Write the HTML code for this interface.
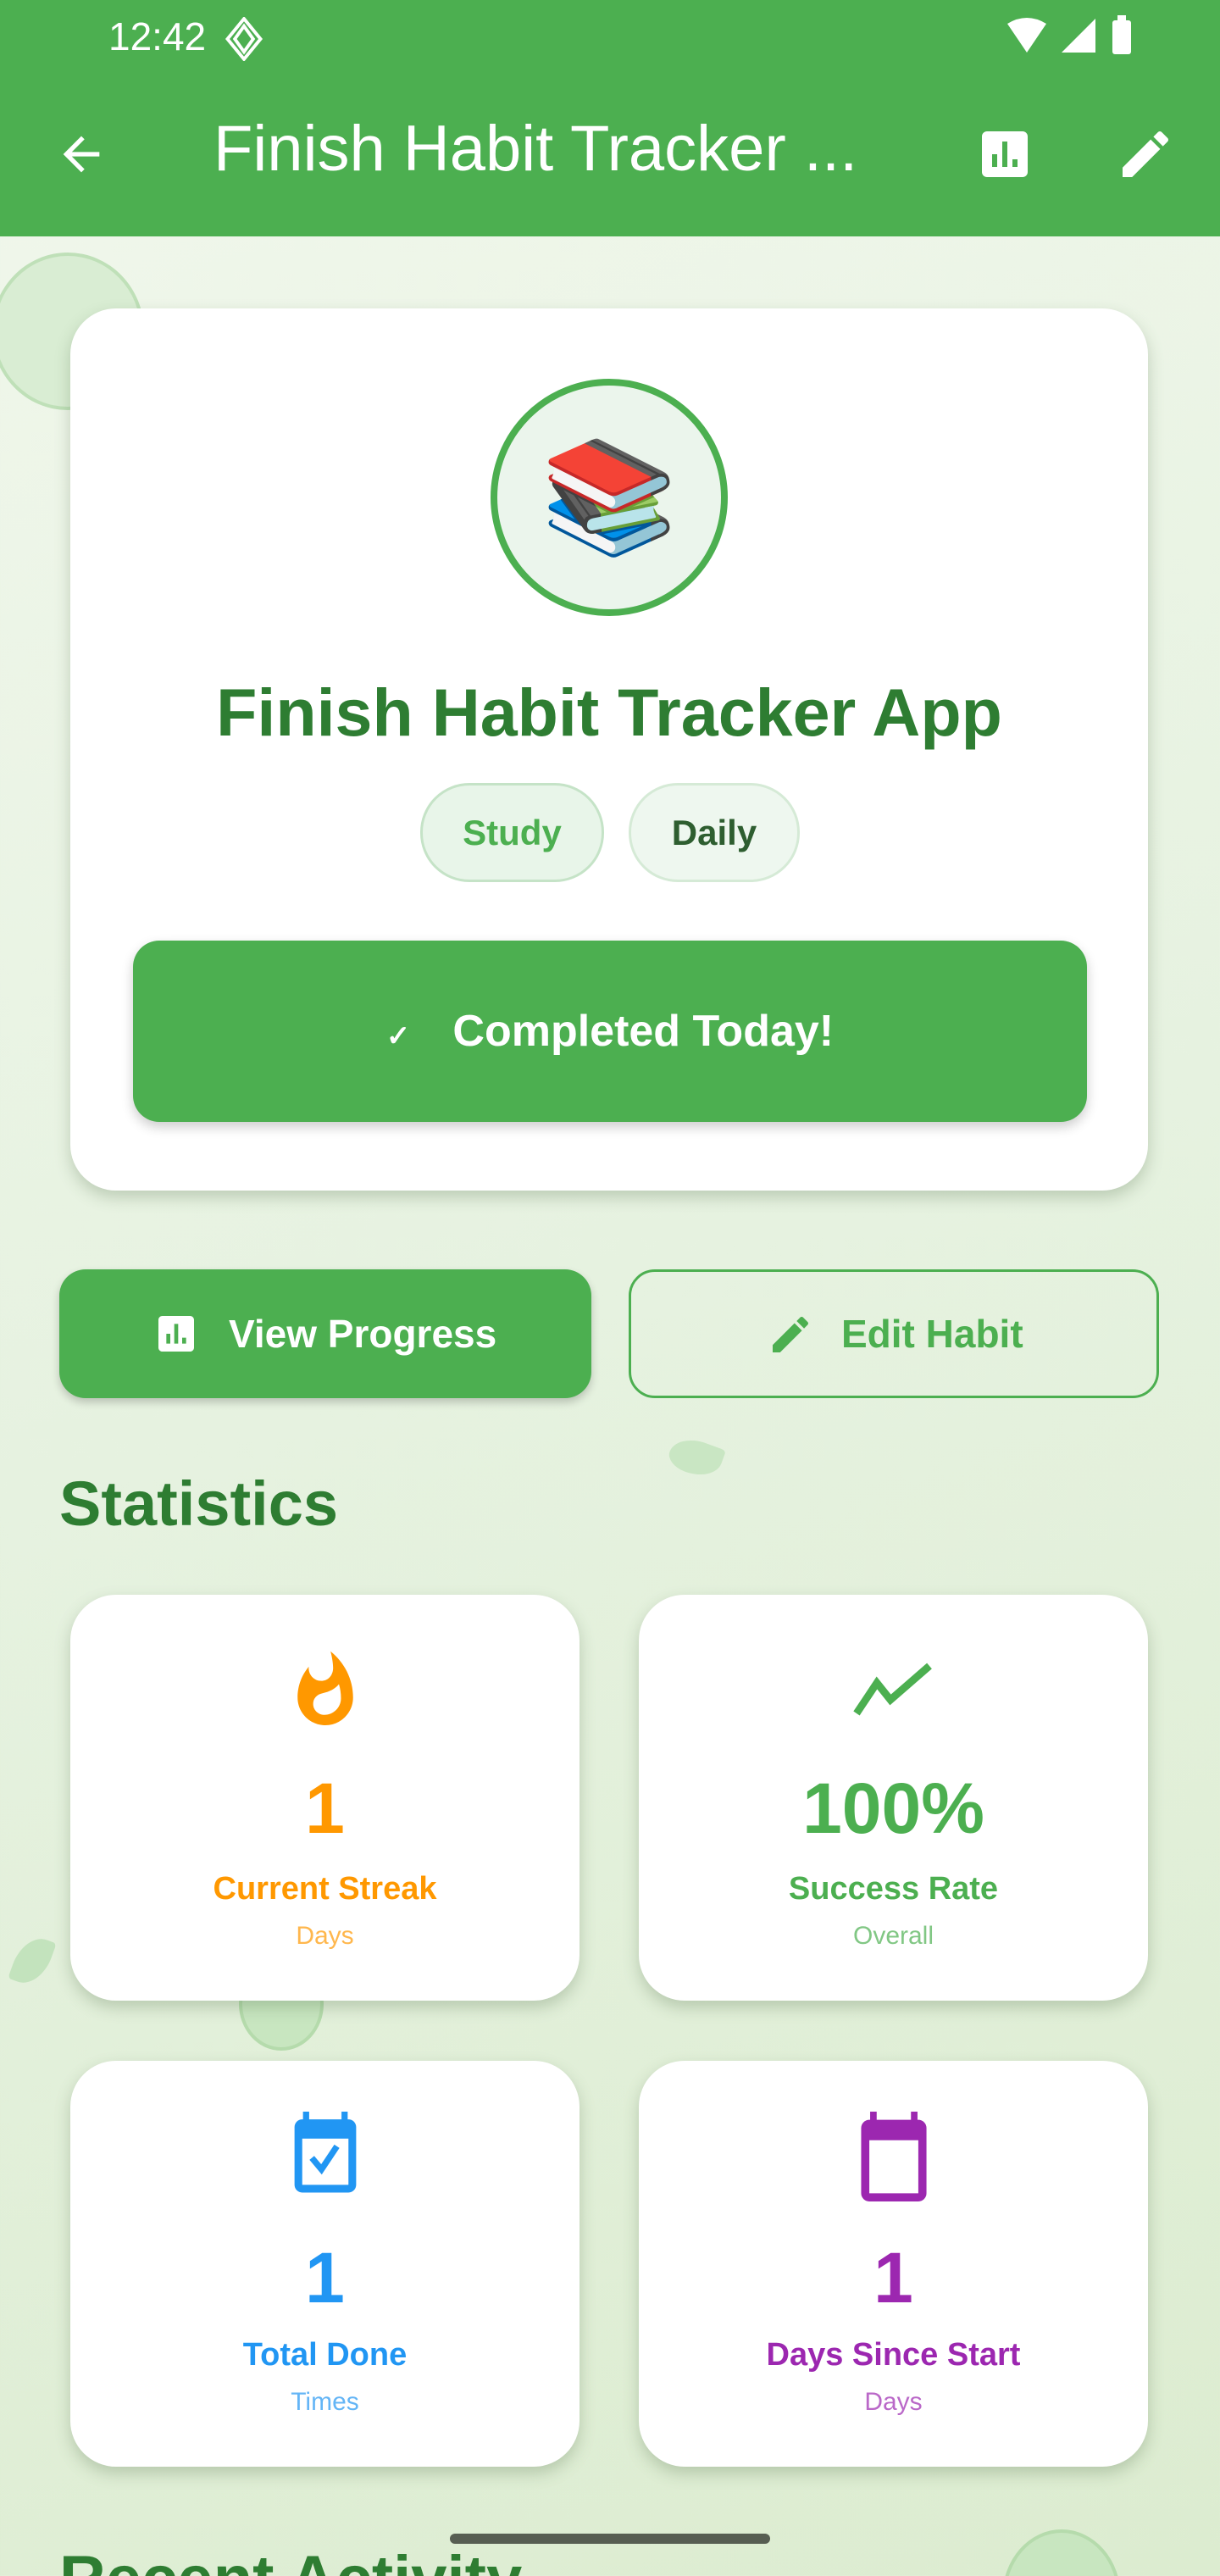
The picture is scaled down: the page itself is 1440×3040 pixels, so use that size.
<!DOCTYPE html>
<html><head><meta charset="utf-8"><style>
*{margin:0;padding:0;box-sizing:border-box}
html,body{width:1440px;height:3040px;overflow:hidden}
body{font-family:"Liberation Sans",sans-serif;background:linear-gradient(160deg,#f1f7ec 0%,#e6f2e0 50%,#dcecd0 100%);position:relative}
.abs{position:absolute}
.bar{left:0;top:0;width:1440px;height:279px;background:#4caf50;color:#fff}
.card{background:#fff;border-radius:54px;box-shadow:0 8px 18px rgba(60,90,50,.25)}
.c{text-align:center;left:0;right:0}
.stat{position:absolute;width:601px;height:479px}
.stat .ic{position:absolute;left:0;right:0;margin:0 auto;display:block}
.num{position:absolute;left:0;right:0;text-align:center;font-weight:bold;font-size:84px}
.lab{position:absolute;left:0;right:0;text-align:center;font-weight:bold;font-size:38px}
.sub{position:absolute;left:0;right:0;text-align:center;font-size:30px}
</style></head><body>
<div class="abs" style="left:-10px;top:298px;width:180px;height:186px;border-radius:50%;background:#d9edd3;border:4px solid #bfe0b8"></div>
<div class="abs" style="left:282px;top:2310px;width:100px;height:110px;border-radius:50%;background:#c8e6c0;border:4px solid #b5dbac"></div>
<div class="abs" style="left:1183px;top:2985px;width:140px;height:160px;border-radius:50%;background:#c8e6c0;border:4px solid #b5dbac"></div>
<div class="abs" style="left:790px;top:1700px;width:62px;height:40px;border-radius:60% 10% 60% 40%;background:#c9e6c3;transform:rotate(20deg)"></div>
<div class="abs" style="left:18px;top:2285px;width:40px;height:58px;border-radius:70% 10% 70% 10%;background:#c3e3bd;transform:rotate(20deg)"></div>

<div class="abs bar">
<div class="abs" style="left:128px;top:16px;font-size:46px">12:42</div>
<svg class="abs" style="left:262px;top:20px" width="52" height="52" viewBox="0 0 24 24"><path d="M12 1L21 12 12 23 3 12Z M12 5L17 12 12 19 7 12Z" fill="none" stroke="#fff" stroke-width="1.8"/></svg>
<svg class="abs" style="left:1185px;top:18px" width="170" height="50" viewBox="0 0 170 50"><path d="M4 10Q27 -4 50 10L27 44Z" fill="#fff"/><path d="M68 44L108 4V44Z" fill="#fff"/><rect x="128" y="6" width="22" height="40" rx="3" fill="#fff"/><rect x="134" y="0" width="10" height="8" fill="#fff"/></svg>
<svg class="abs" style="left:64px;top:150px" width="64" height="64" viewBox="0 0 24 24"><path d="M20 11H7.8l5.6-5.6L12 4l-8 8 8 8 1.4-1.4L7.8 13H20z" fill="#fff"/></svg>
<div class="abs" style="left:252px;top:132px;font-size:76px;white-space:nowrap">Finish Habit Tracker ...</div>
<svg class="abs" style="left:1150px;top:146px" width="72" height="72" viewBox="0 0 24 24"><path d="M19 3H5c-1.1 0-2 .9-2 2v14c0 1.1.9 2 2 2h14c1.1 0 2-.9 2-2V5c0-1.1-.9-2-2-2zM9 17H7v-5h2v5zm4 0h-2V7h2v10zm4 0h-2v-3h2v3z" fill="#fff"/></svg>
<svg class="abs" style="left:1316px;top:146px" width="72" height="72" viewBox="0 0 24 24"><path d="M3 17.25V21h3.75L17.81 9.94l-3.75-3.75L3 17.25zM20.71 7.04a1 1 0 000-1.41l-2.34-2.34a1 1 0 00-1.41 0l-1.83 1.83 3.75 3.75 1.83-1.83z" fill="#fff"/></svg>
</div>

<div class="abs card" style="left:83px;top:364px;width:1272px;height:1041px">
<div class="abs" style="left:496px;top:83px;width:280px;height:280px;border-radius:50%;background:#ebf5ec;border:8px solid #4caf50;text-align:center;line-height:264px;font-size:130px;font-family:'Noto Color Emoji',sans-serif">📚</div>
<div class="abs c" style="top:431px;font-size:79px;font-weight:bold;color:#2e7d32">Finish Habit Tracker App</div>
<div class="abs" style="left:413px;top:560px;width:217px;height:117px;border-radius:58px;background:#e8f5e9;border:3px solid #c5e3c7;color:#4caf50;font-size:42px;font-weight:bold;text-align:center;line-height:111px">Study</div>
<div class="abs" style="left:659px;top:560px;width:202px;height:117px;border-radius:58px;background:#eef7ef;border:3px solid #d5ead6;color:#2e5e30;font-size:42px;font-weight:bold;text-align:center;line-height:111px">Daily</div>
<div class="abs" style="left:74px;top:746px;width:1126px;height:214px;border-radius:31px;background:#4caf50;box-shadow:0 6px 14px rgba(0,0,0,.2);color:#fff;font-size:52px;font-weight:bold;text-align:center;line-height:214px"><span style="font-size:34px;margin-right:50px">✓</span>Completed Today!</div>
</div>

<div class="abs" style="left:70px;top:1498px;width:628px;height:152px;border-radius:31px;background:#4caf50;box-shadow:0 5px 10px rgba(0,0,0,.2);color:#fff;font-size:46px;font-weight:bold;line-height:152px">
<svg class="abs" style="left:110px;top:48px" width="56" height="56" viewBox="0 0 24 24"><path d="M19 3H5c-1.1 0-2 .9-2 2v14c0 1.1.9 2 2 2h14c1.1 0 2-.9 2-2V5c0-1.1-.9-2-2-2zM9 17H7v-5h2v5zm4 0h-2V7h2v10zm4 0h-2v-3h2v3z" fill="#fff"/></svg>
<span class="abs" style="left:200px">View Progress</span></div>
<div class="abs" style="left:742px;top:1498px;width:626px;height:152px;border-radius:31px;border:3px solid #4caf50;color:#4caf50;font-size:46px;font-weight:bold;line-height:146px">
<svg class="abs" style="left:160px;top:46px" width="56" height="56" viewBox="0 0 24 24"><path d="M3 17.25V21h3.75L17.81 9.94l-3.75-3.75L3 17.25zM20.71 7.04a1 1 0 000-1.41l-2.34-2.34a1 1 0 00-1.41 0l-1.83 1.83 3.75 3.75 1.83-1.83z" fill="#4caf50"/></svg>
<span class="abs" style="left:248px">Edit Habit</span></div>

<div class="abs" style="left:70px;top:1732px;font-size:74px;font-weight:bold;color:#2e7d32">Statistics</div>

<div class="stat card" style="left:83px;top:1882px">
<svg class="ic" style="top:66px" width="78" height="88" viewBox="4 0.5 16 21.5"><path d="M13.5.67s.74 2.65.74 4.8c0 2.06-1.35 3.73-3.41 3.73-2.07 0-3.63-1.67-3.63-3.73l.03-.36C5.21 7.51 4 10.62 4 14c0 4.42 3.58 8 8 8s8-3.58 8-8C20 8.61 17.41 3.8 13.5.67zM11.71 19c-1.78 0-3.22-1.4-3.22-3.14 0-1.62 1.05-2.76 2.81-3.12 1.77-.36 3.6-1.21 4.62-2.58.39 1.29.59 2.65.59 4.04 0 2.65-2.15 4.8-4.8 4.8z" fill="#ff9800"/></svg>
<div class="num" style="top:204px;color:#ff9800">1</div>
<div class="lab" style="top:326px;color:#ff9800">Current Streak</div>
<div class="sub" style="top:386px;color:#ffb74d">Days</div>
</div>
<div class="stat card" style="left:754px;top:1882px">
<svg class="ic" style="top:80px" width="96" height="64" viewBox="0 0 24 16"><path d="M1 15l6-9 4 5 11.5-10" fill="none" stroke="#4caf50" stroke-width="2.2"/></svg>
<div class="num" style="top:204px;color:#4caf50">100%</div>
<div class="lab" style="top:326px;color:#4caf50">Success Rate</div>
<div class="sub" style="top:386px;color:#81c784">Overall</div>
</div>
<div class="stat card" style="left:83px;top:2432px">
<svg class="ic" style="top:60px" width="90" height="100" viewBox="0 0 18 22"><path d="M4 0v3M14 0v3" stroke="#2196f3" stroke-width="1.6"/><rect x="1" y="2" width="16" height="19" rx="2" fill="#2196f3"/><rect x="3" y="7" width="12" height="12" fill="#fff"/><path d="M5.5 12l2.5 3 4-6" fill="none" stroke="#2196f3" stroke-width="1.6"/></svg>
<div class="num" style="top:208px;color:#2196f3">1</div>
<div class="lab" style="top:326px;color:#2196f3">Total Done</div>
<div class="sub" style="top:386px;color:#64b5f6">Times</div>
</div>
<div class="stat card" style="left:754px;top:2432px">
<svg class="ic" style="top:60px" width="96" height="106" viewBox="0 0 18 22"><path d="M4 0v3M14 0v3" stroke="#9c27b0" stroke-width="1.6"/><rect x="1" y="2" width="16" height="20" rx="2" fill="#9c27b0"/><rect x="3" y="7" width="12" height="13" fill="#fff"/></svg>
<div class="num" style="top:208px;color:#9c27b0">1</div>
<div class="lab" style="top:326px;color:#9c27b0">Days Since Start</div>
<div class="sub" style="top:386px;color:#ba68c8">Days</div>
</div>

<div class="abs" style="left:70px;top:3000px;font-size:76px;font-weight:bold;color:#2e7d32">Recent Activity</div>
<div class="abs" style="left:531px;top:2990px;width:378px;height:12px;border-radius:6px;background:#575e52"></div>
</body></html>
